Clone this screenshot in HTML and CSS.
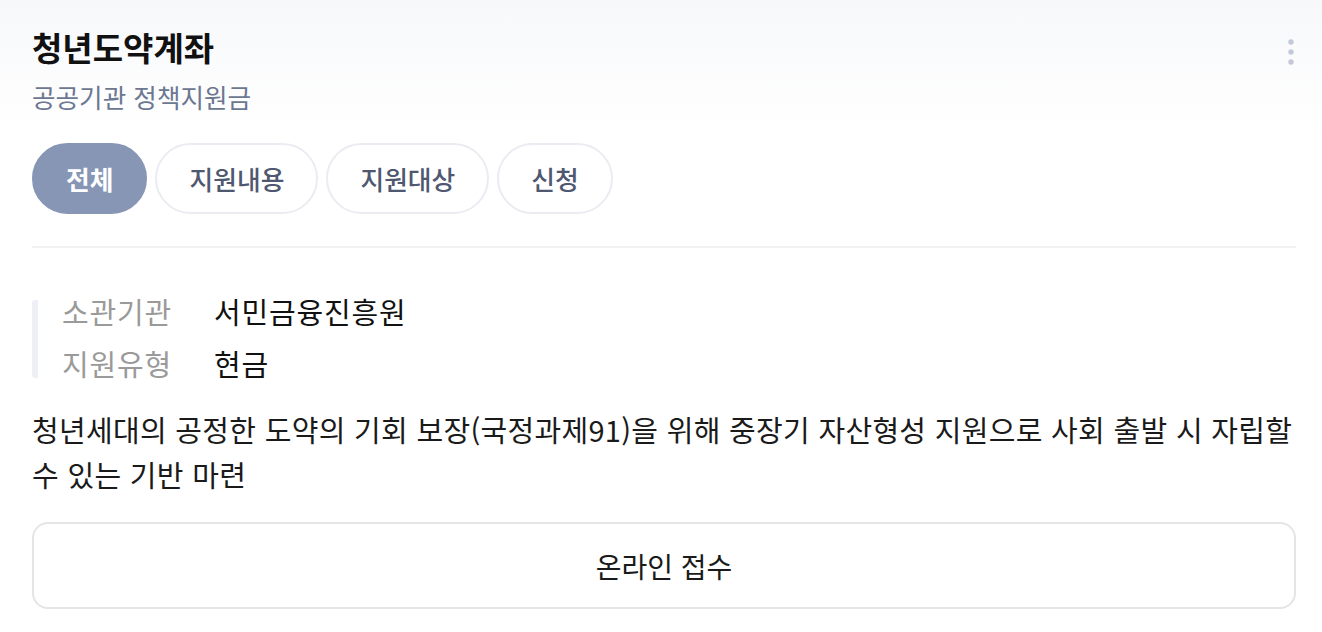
FILE: index.html
```html
<!DOCTYPE html>
<html lang="ko">
<head>
<meta charset="utf-8">
<title>청년도약계좌</title>
<link rel="stylesheet" href="styles.css">
</head>
<body>
<div class="card">
  <header class="head">
    <div class="titles">
      <h1 class="title">청년도약계좌</h1>
      <p class="subtitle">공공기관 정책지원금</p>
    </div>
    <button class="more" aria-label="더보기">
      <svg width="8" height="28" viewBox="0 0 8 28"><circle cx="4" cy="4" r="2.7" fill="#c4c9d9"/><circle cx="4" cy="14" r="2.7" fill="#c4c9d9"/><circle cx="4" cy="24" r="2.7" fill="#c4c9d9"/></svg>
    </button>
  </header>
  <nav class="tabs">
    <span class="tab active">전체</span>
    <span class="tab">지원내용</span>
    <span class="tab">지원대상</span>
    <span class="tab">신청</span>
  </nav>
  <div class="divider"></div>
  <dl class="info">
    <div class="row"><dt>소관기관</dt><dd>서민금융진흥원</dd></div>
    <div class="row"><dt>지원유형</dt><dd>현금</dd></div>
  </dl>
  <p class="desc">청년세대의 공정한 도약의 기회 보장(국정과제91)을 위해 중장기 자산형성 지원으로 사회 출발 시 자립할 수 있는 기반 마련</p>
  <button class="apply">온라인 접수</button>
</div>
</body>
</html>
```
FILE: styles.css
```css
html, body {
  margin: 0;
  padding: 0;
}
body {
  background: linear-gradient(180deg, #f7f8fa 0px, #ffffff 135px, #ffffff 100%);
  font-family: "Noto Sans CJK KR", "Noto Sans", sans-serif;
  color: #111;
  min-height: 632px;
}
.card {
  padding: 24px 26px 0 32px;
}
.head {
  display: flex;
  justify-content: space-between;
  align-items: flex-start;
}
.title {
  margin: 0;
  font-size: 33px;
  font-weight: 700;
  line-height: 46px;
  color: #111;
}
.subtitle {
  margin: 12px 0 0;
  font-size: 25.6px;
  font-weight: 400;
  line-height: 30px;
  color: #6c7791;
}
.more {
  border: 0;
  background: none;
  padding: 0;
  margin-top: 14px;
  margin-right: 1px;
  width: 8px;
  height: 28px;
  display: flex;
}
.tabs {
  display: flex;
  gap: 8px;
  margin-top: 31px;
}
.tab {
  display: flex;
  align-items: center;
  justify-content: center;
  height: 71px;
  box-sizing: border-box;
  padding: 0 32px;
  border-radius: 36px;
  border: 2px solid #ebecf2;
  background: #fff;
  font-size: 25.8px;
  font-weight: 500;
  color: #4e5870;
}
.tab.active {
  background: #8796b4;
  border-color: #8796b4;
  color: #fff;
  font-weight: 700;
}
.divider {
  height: 2px;
  background: #f2f2f5;
  margin-top: 32px;
}
.info {
  margin: 52px 0 0;
  border-left: 6px solid #eef0f5;
  border-radius: 3px;
  padding: 0 0 0 24px;
  display: flex;
  flex-direction: column;
  gap: 26px;
}
.row {
  display: flex;
  align-items: flex-start;
  height: 26px;
  line-height: 22px;
}
.row dt {
  width: 152px;
  font-size: 29px;
  color: #9a9a9a;
  letter-spacing: 0.8px;
}
.row dd {
  margin: 0;
  font-size: 29px;
  color: #111;
  letter-spacing: 0.8px;
}
.desc {
  margin: 29px 0 0;
  font-size: 29px;
  line-height: 45px;
  color: #1a1a1a;
  letter-spacing: 0.3px;
}
.apply {
  display: block;
  width: 100%;
  margin-top: 25px;
  height: 87px;
  border: 2px solid #e5e5e5;
  border-radius: 16px;
  background: #fff;
  font-family: inherit;
  font-size: 28px;
  color: #1a1a1a;
}
```
